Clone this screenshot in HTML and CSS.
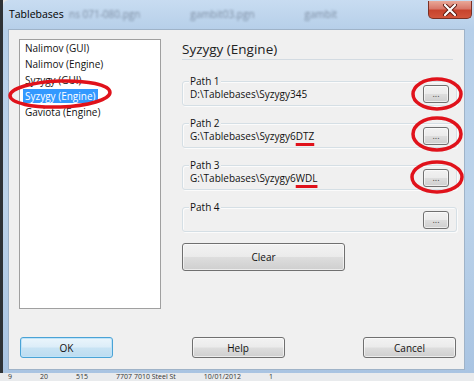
FILE: index.html
```html
<!DOCTYPE html>
<html lang="en">
<head>
  <meta charset="UTF-8" />
  <title>Tablebases</title>
  <link rel="stylesheet" href="styles.css">
</head>
<body>
  <div class="screen">
    <div class="window">
      <div class="titlebar">
        <span class="title">Tablebases</span>
        <span class="ghost">ns 071-080.pgn</span>
        <span class="ghost">gambit03.pgn</span>
        <span class="ghost">gambit</span>
        <span class="close">
          <svg width="16" height="12" viewBox="0 0 16 12">
            <path d="M3 1 L13 11 M13 1 L3 11" stroke="#5a1a12" stroke-width="4" stroke-linecap="round" />
            <path d="M3 1 L13 11 M13 1 L3 11" stroke="#fff" stroke-width="2.2" stroke-linecap="round" />
          </svg>
        </span>
      </div>

      <div class="client">
        <div class="main">
          <ul class="tb-list">
            <li>Nalimov (GUI)</li>
            <li>Nalimov (Engine)</li>
            <li>Syzygy (GUI)</li>
            <li><span class="sel">Syzygy (Engine)</span></li>
            <li>Gaviota (Engine)</li>
          </ul>

          <div class="panel">
            <h1>Syzygy (Engine)</h1>

            <div class="group">
              <span class="group-label">Path 1</span>
              <div class="row">
                <span class="path">D:\Tablebases\Syzygy345</span>
                <button class="btn browse">...</button>
              </div>
            </div>

            <div class="group">
              <span class="group-label">Path 2</span>
              <div class="row">
                <span class="path">G:\Tablebases\Syzygy6<span class="mark">DTZ</span></span>
                <button class="btn browse">...</button>
              </div>
            </div>

            <div class="group">
              <span class="group-label">Path 3</span>
              <div class="row">
                <span class="path">G:\Tablebases\Syzygy6<span class="mark">WDL</span></span>
                <button class="btn browse">...</button>
              </div>
            </div>

            <div class="group">
              <span class="group-label">Path 4</span>
              <div class="row">
                <span class="path"></span>
                <button class="btn browse">...</button>
              </div>
            </div>

            <button class="btn clear">Clear</button>
          </div>
        </div>

        <div class="actions">
          <button class="btn default">OK</button>
          <button class="btn">Help</button>
          <button class="btn">Cancel</button>
        </div>
      </div>
    </div>

    <div class="behind">
      <span>9</span><span>20</span><span>515</span><span>7707 7010 Steel St</span><span>10/01/2012</span><span>1</span>
    </div>

    <!-- red hand-drawn marks on top of the screenshot -->
    <svg class="marks" width="474" height="381" viewBox="0 0 474 381">
      <g fill="none" stroke="#e0121b" stroke-width="3.5">
        <ellipse cx="60" cy="94" rx="50" ry="13" transform="rotate(-2 60 94)" />
        <ellipse cx="437" cy="94" rx="24" ry="15" />
        <ellipse cx="437" cy="134" rx="24" ry="16" />
        <ellipse cx="437" cy="177" rx="25" ry="15" />
      </g>
    </svg>
  </div>
</body>
</html>
```

FILE: styles.css
```css
* {
  box-sizing: border-box;
}
body {
  margin: 0;
  width: 474px;
  height: 381px;
  overflow: hidden;
  font-family: "Open Sans", "Noto Sans", sans-serif;
  font-size: 10px;
  color: #111;
}
.screen {
  position: relative;
  width: 474px;
  height: 381px;
  overflow: hidden;
  display: flex;
  flex-direction: column;
  background: linear-gradient(to right, #2e3236 0, #2e3236 3px, #e4e6e8 3px);
}
.window {
  flex: none;
  width: 490px;
  height: 373px;
  margin-left: 3px;
  padding-left: 5px;
  border-radius: 6px 0 0 0;
  background: linear-gradient(to bottom, #c8dcf1 0, #b6cfe9 30px, #bcd3ea 200px, #a9c4e2 373px);
  display: flex;
  flex-direction: column;
}
.titlebar {
  height: 29px;
  display: flex;
  align-items: flex-start;
  padding-top: 8px;
  padding-left: 1px;
}
.title {
  font-size: 10.5px;
  line-height: 13px;
  color: #000;
  width: 60px;
}
.ghost {
  font-size: 10px;
  line-height: 13px;
  color: rgba(40, 50, 70, 0.45);
  filter: blur(1.3px);
  margin-right: 50px;
}
.close {
  margin-left: auto;
  margin-right: 21px;
  margin-top: -7px;
  width: 44px;
  height: 18px;
  border: 1px solid #7a3024;
  border-top: 0;
  border-radius: 0 0 5px 5px;
  background: linear-gradient(to bottom, #e9a898 0, #d8786a 45%, #c8432d 55%, #d2553c 100%);
  display: flex;
  align-items: center;
  justify-content: center;
}
.client {
  width: 457px;
  height: 341px;
  background: #f0f0f0;
  border: 1px solid #9fb3c8;
  padding: 9px 0 0 10px;
}
.main {
  display: flex;
}
.tb-list {
  list-style: none;
  margin: 0;
  width: 142px;
  height: 270px;
  padding: 0 0 0 5px;
  background: #fff;
  border: 1px solid #a0a0a0;
}
.tb-list li {
  line-height: 16px;
  white-space: nowrap;
}
.sel {
  display: inline-block;
  line-height: 14px;
  margin-left: -2px;
  padding: 0 2px;
  background: #3399ff;
  color: #fff;
}
.panel {
  width: 275px;
  margin-left: 21px;
  display: flex;
  flex-direction: column;
  align-items: flex-start;
}
h1 {
  margin: 0 4px 0 0;
  align-self: stretch;
  font-size: 13.5px;
  font-weight: normal;
  line-height: 20px;
  color: #222;
  border-bottom: 1px solid #d3dbe2;
}
.group {
  width: 275px;
  height: 25px;
  margin-top: 17px;
  padding: 0 7px 0 6px;
  border: 1px solid #d5dfe5;
  border-radius: 3px;
  box-shadow: inset 1px 1px 0 #fbfbfb, 1px 1px 0 #fbfbfb;
}
h1 + .group {
  margin-top: 21px;
}
.group-label {
  display: block;
  width: max-content;
  margin-top: -8px;
  padding: 0 1px;
  line-height: 14px;
  background: #f0f0f0;
}
.row {
  margin-top: -3px;
  height: 18px;
  display: flex;
  align-items: center;
  justify-content: space-between;
  padding-left: 1px;
}
.mark {
  text-decoration: underline;
  text-decoration-color: #e0121b;
  text-decoration-thickness: 3px;
  text-underline-offset: 3px;
}
.btn {
  font-family: inherit;
  font-size: 10px;
  color: #111;
  width: 93px;
  height: 21px;
  padding: 0;
  border: 1px solid #707070;
  border-radius: 3px;
  background: linear-gradient(to bottom, #f2f2f2 0, #ebebeb 48%, #dddddd 52%, #cfcfcf 100%);
  box-shadow: inset 0 0 0 1px rgba(255, 255, 255, 0.6);
}
.browse {
  width: 26px;
  height: 18px;
  font-size: 9px;
  line-height: 14px;
  color: #444;
}
.clear {
  width: 163px;
  height: 28px;
  margin-top: 11px;
}
.actions {
  display: flex;
  justify-content: space-between;
  margin-top: 28px;
  padding: 0 8px 0 1px;
}
.default {
  border-color: #4aa3d6;
  background: linear-gradient(to bottom, #eaf5fc 0, #dcedf8 48%, #c8e3f4 52%, #bcdcf0 100%);
  box-shadow: inset 0 0 0 1px #bfe3f8;
}
.behind {
  flex: 1;
  display: flex;
  gap: 28px;
  padding-left: 8px;
  font-size: 7px;
  line-height: 8px;
  color: #333;
  background: #e9ebed;
}
.marks {
  position: absolute;
  left: 0;
  top: 0;
  pointer-events: none;
}
```
